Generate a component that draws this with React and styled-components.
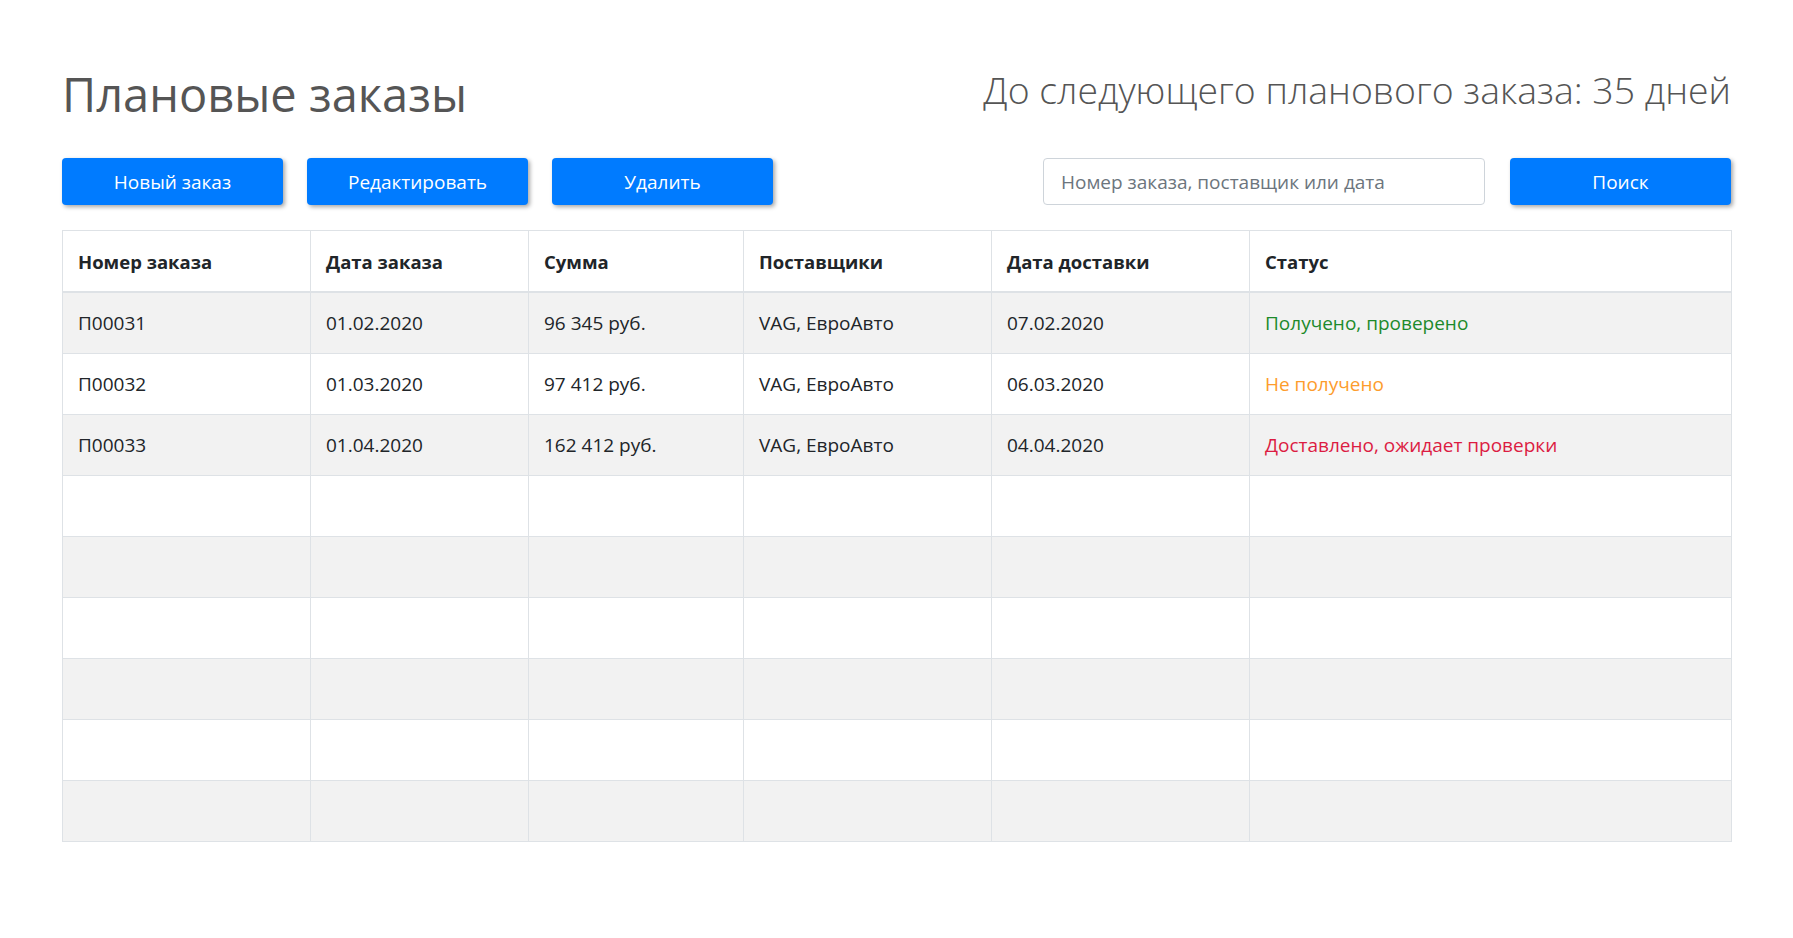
import React from 'react';
import styled, { createGlobalStyle } from 'styled-components';

const orders = [
    { id: 'П00031', date: '01.02.2020', sum: '96 345 руб.', vendors: 'VAG, ЕвроАвто', delivery: '07.02.2020', status: 'Получено, проверено', kind: 'ok' },
    { id: 'П00032', date: '01.03.2020', sum: '97 412 руб.', vendors: 'VAG, ЕвроАвто', delivery: '06.03.2020', status: 'Не получено', kind: 'wait' },
    { id: 'П00033', date: '01.04.2020', sum: '162 412 руб.', vendors: 'VAG, ЕвроАвто', delivery: '04.04.2020', status: 'Доставлено, ожидает проверки', kind: 'check' },
];

const columns = [
    { title: 'Номер заказа', width: 248 },
    { title: 'Дата заказа', width: 218 },
    { title: 'Сумма', width: 215 },
    { title: 'Поставщики', width: 248 },
    { title: 'Дата доставки', width: 258 },
    { title: 'Статус', width: 482 },
];

const statusColors = {
    ok: '#1d8a2b',
    wait: '#fd9c2c',
    check: '#dc1c42',
};

const TOTAL_ROWS = 9;

const App = () => {
    const emptyRows = [...Array(TOTAL_ROWS - orders.length).keys()];

    return (
        <>
            <GlobalStyle />
            <Page>
                <Header>
                    <Title>Плановые заказы</Title>
                    <Countdown>До следующего планового заказа: 35 дней</Countdown>
                </Header>
                <Toolbar>
                    <ButtonGroup>
                        <Button>Новый заказ</Button>
                        <Button>Редактировать</Button>
                        <Button>Удалить</Button>
                    </ButtonGroup>
                    <SearchGroup>
                        <SearchInput placeholder="Номер заказа, поставщик или дата" />
                        <Button>Поиск</Button>
                    </SearchGroup>
                </Toolbar>
                <Table>
                    <colgroup>
                        {columns.map(col => <col key={col.title} style={{ width: col.width }} />)}
                    </colgroup>
                    <thead>
                        <tr>
                            {columns.map(col => <HeadCell key={col.title}>{col.title}</HeadCell>)}
                        </tr>
                    </thead>
                    <tbody>
                        {orders.map(order => (
                            <Row key={order.id}>
                                <Cell>{order.id}</Cell>
                                <Cell>{order.date}</Cell>
                                <Cell>{order.sum}</Cell>
                                <Cell>{order.vendors}</Cell>
                                <Cell>{order.delivery}</Cell>
                                <Cell color={statusColors[order.kind]}>{order.status}</Cell>
                            </Row>
                        ))}
                        {emptyRows.map(idx => (
                            <Row key={'empty' + idx}>
                                {columns.map(col => <Cell key={col.title} />)}
                            </Row>
                        ))}
                    </tbody>
                </Table>
            </Page>
        </>
    );
};

const GlobalStyle = createGlobalStyle`
    body {
        margin: 0;
        background: #fff;
        font-family: "Open Sans", "Noto Sans", sans-serif;
        color: #212529;
    }
`;

const Page = styled.div`
    padding: 67px 62px 0 62px;
`;

const Header = styled.div`
    display: flex;
    justify-content: space-between;
    align-items: flex-start;
    height: 91px;
`;

const Title = styled.h1`
    margin: 0;
    font-size: 47px;
    line-height: 55px;
    font-weight: 400;
    color: #555;
`;

const Countdown = styled.div`
    font-size: 37.4px;
    line-height: 46px;
    font-weight: 300;
    color: #555;
`;

const Toolbar = styled.div`
    display: flex;
    justify-content: space-between;
    align-items: center;
    margin-bottom: 25px;
`;

const ButtonGroup = styled.div`
    display: flex;
    gap: 24px;
`;

const SearchGroup = styled.div`
    display: flex;
    gap: 25px;
`;

const Button = styled.button`
    width: 221px;
    height: 47px;
    border: none;
    border-radius: 4px;
    background: #007bff;
    color: #fff;
    font-family: inherit;
    font-size: 19px;
    box-shadow: 2px 2px 4px rgba(0, 0, 0, 0.35);
    cursor: pointer;
`;

const SearchInput = styled.input`
    box-sizing: border-box;
    width: 442px;
    height: 47px;
    padding: 0 17px;
    border: 1px solid #ced4da;
    border-radius: 4px;
    font-family: inherit;
    font-size: 19px;
    color: #495057;
    outline: none;

    &::placeholder {
        color: #6c757d;
    }
`;

const Table = styled.table`
    width: 1669px;
    table-layout: fixed;
    border-collapse: collapse;
    font-size: 19px;
`;

const HeadCell = styled.th`
    height: 60px;
    padding: 0 15px;
    text-align: left;
    font-size: 18.5px;
    font-weight: 700;
    border: 1px solid #dee2e6;
    border-bottom: 2px solid #dee2e6;
    vertical-align: middle;
`;

const Row = styled.tr`
    &:nth-child(odd) {
        background: #f2f2f2;
    }
`;

const Cell = styled.td`
    height: 60px;
    padding: 0 15px;
    border: 1px solid #dee2e6;
    vertical-align: middle;
    color: ${props => props.color || '#212529'};
`;

export default App;
